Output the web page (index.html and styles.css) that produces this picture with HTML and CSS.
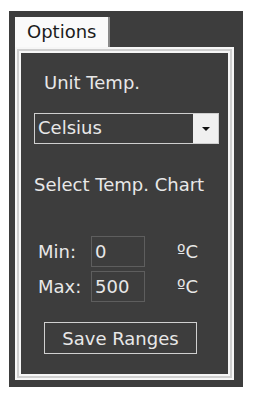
FILE: index.html
```html
<!DOCTYPE html>
<html lang="en">
<head>
    <meta charset="UTF-8">
    <meta name="viewport" content="width=device-width, initial-scale=1.0">
    <title>Options</title>
    <link rel="stylesheet" href="styles.css">
</head>
<body>

    <div class="window">
        <div class="tab">Options</div>

        <div class="page">
            <div class="unit-label">Unit Temp.</div>

            <div class="select">
                <span class="select-value">Celsius</span>
                <span class="select-btn"><span class="arrow"></span></span>
            </div>

            <div class="chart-label">Select Temp. Chart</div>

            <div class="range-row first">
                <span class="range-label">Min:</span>
                <span class="range-input">0</span>
                <span class="range-unit">&#186;C</span>
            </div>
            <div class="range-row">
                <span class="range-label">Max:</span>
                <span class="range-input">500</span>
                <span class="range-unit">&#186;C</span>
            </div>

            <button class="save-btn">Save Ranges</button>
        </div>
    </div>

</body>
</html>
```

FILE: styles.css
```css
body {
    margin: 0;
    background-color: #fff;
    font-family: "DejaVu Sans", Verdana, sans-serif;
    font-size: 18px;
}

.window {
    box-sizing: border-box;
    width: 234px;
    height: 376px;
    margin: 11px 0 0 9px;
    padding: 6px 9px 7px 6px;
    background-color: #3d3d3d;
}

.tab {
    box-sizing: border-box;
    width: 95px;
    height: 30px;
    padding-left: 12px;
    line-height: 30px;
    color: #1c1c1c;
    background-color: #fafafa;
    border-right: 2px solid #8a8a8a;
}

.page {
    box-sizing: border-box;
    height: 333px;
    padding-left: 17px;
    border: 2px solid #f6f6f6;
    box-shadow: inset 0 0 0 2px #cfcfcf, inset 0 0 0 4px #f6f6f6;
    color: #e8e8e8;
}

.unit-label {
    margin: 23px 0 0 10px;
    line-height: 22px;
}

.select {
    box-sizing: border-box;
    display: flex;
    width: 185px;
    height: 31px;
    margin-top: 19px;
    border: 1px solid #cfcfcf;
}

.select-value {
    flex: 1;
    padding-left: 3px;
    line-height: 28px;
}

.select-btn {
    display: flex;
    align-items: center;
    justify-content: center;
    width: 25px;
    background-color: #f0f0f0;
}

.arrow {
    width: 0;
    height: 0;
    border-left: 4px solid transparent;
    border-right: 4px solid transparent;
    border-top: 4px solid #111;
}

.chart-label {
    margin-top: 30px;
    line-height: 22px;
}

.range-row {
    display: flex;
    align-items: center;
    height: 31px;
    margin-top: 4px;
}

.range-row.first {
    margin-top: 40px;
}

.range-label {
    box-sizing: border-box;
    width: 57px;
    padding-left: 4px;
}

.range-input {
    box-sizing: border-box;
    width: 54px;
    height: 31px;
    padding-left: 3px;
    line-height: 29px;
    border: 1px solid #5e5e5e;
}

.range-unit {
    margin-left: 32px;
}

.save-btn {
    display: block;
    width: 153px;
    height: 32px;
    margin: 20px 0 0 10px;
    padding: 0;
    font-family: inherit;
    font-size: 18px;
    color: #e8e8e8;
    background-color: transparent;
    border: 1px solid #d0d0d0;
}
```
